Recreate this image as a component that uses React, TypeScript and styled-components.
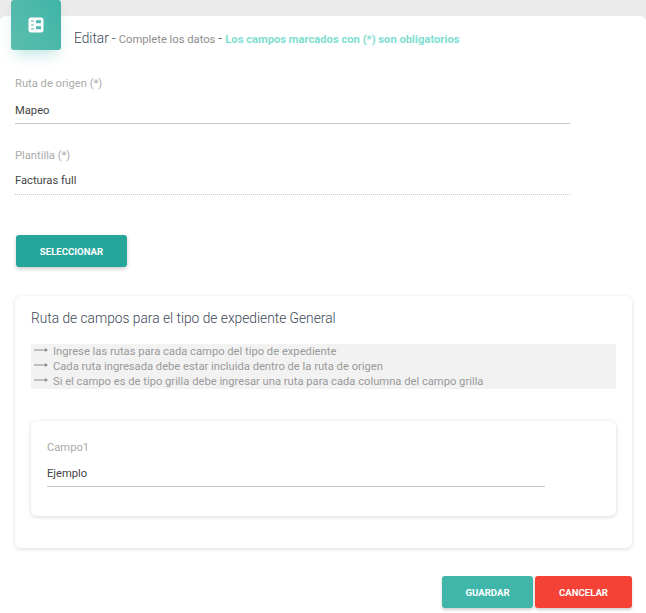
import React from 'react';
import styled, { createGlobalStyle } from 'styled-components';

const GlobalStyle = createGlobalStyle`
  html, body {
    margin: 0;
    padding: 0;
    background: #ebebeb;
    font-family: Roboto, "Liberation Sans", sans-serif;
  }
  * { box-sizing: border-box; }
`;

const Page = styled.div`
  width: 646px;
  height: 613px;
  padding-top: 16px;
  overflow: hidden;
  position: relative;
`;

const Sheet = styled.div`
  background: #fff;
  height: 597px;
  border-radius: 6px 6px 0 0;
  padding: 0 14px 0 15px;
`;

const HeaderIcon = styled.div`
  position: absolute;
  left: 11px;
  top: 0;
  width: 50px;
  height: 50px;
  border-radius: 3px;
  background: linear-gradient(60deg, #5cbdae, #3fb5a8);
  box-shadow: 0 8px 14px -4px rgba(38, 166, 154, 0.3);
  display: flex;
  align-items: center;
  justify-content: center;
`;

const Header = styled.div`
  height: 35px;
  padding: 14px 0 0 59px;
  display: flex;
  align-items: baseline;
  white-space: nowrap;
  color: #3c4858;
`;

const HeaderTitle = styled.span`
  font-size: 13.76px;
  font-weight: 300;
  color: #3c4858;
`;

const HeaderNote = styled.span`
  font-size: 11.2px;
  color: #8e8e8e;
  margin-left: 3px;
`;

const HeaderRequired = styled.span`
  font-size: 11.2px;
  font-weight: 700;
  color: #80ded0;
  margin-left: 3px;
`;

const Dash = styled.span`
  font-size: 13.76px;
  font-weight: 300;
  margin-left: 3px;
`;

const Field = styled.div<{ $width: number; $top: number }>`
  width: ${p => p.$width}px;
  padding-top: ${p => p.$top}px;
`;

const FieldLabel = styled.div`
  font-size: 11.2px;
  line-height: 14px;
  color: #aaa;
`;

const FieldValue = styled.div<{ $dotted?: boolean; $gap: number }>`
  font-size: 11.2px;
  line-height: 14px;
  color: #444;
  margin-top: ${p => p.$gap}px;
  padding-bottom: ${p => (p.$dotted ? 6 : 5)}px;
  border-bottom: 1px ${p => (p.$dotted ? 'dotted' : 'solid')} #c8c8c8;
`;

const SelectButton = styled.button`
  display: block;
  width: 111px;
  height: 32px;
  margin: 40px 0 0 1px;
  padding: 0;
  border: 0;
  border-radius: 3px;
  background: #26a69a;
  color: #fff;
  font-family: inherit;
  font-size: 9.6px;
  font-weight: 700;
  box-shadow: 0 2px 4px rgba(0, 0, 0, 0.2);
`;

const Card = styled.div`
  margin-top: 29px;
  width: 617px;
  height: 252px;
  border-radius: 6px;
  background: #fff;
  padding: 14px 16px 0;
  box-shadow: 0 1px 4px rgba(0, 0, 0, 0.14);
`;

const CardTitle = styled.div`
  font-size: 13.76px;
  font-weight: 300;
  line-height: 16px;
  color: #3c4858;
`;

const InfoBox = styled.div`
  margin-top: 18px;
  height: 45px;
  background: #f2f2f2;
  padding-left: 3px;
`;

const InfoRow = styled.div`
  display: flex;
  align-items: center;
  height: 15px;
  font-size: 11.2px;
  color: #9a9a9a;
  white-space: nowrap;
`;

const Arrow = styled.svg`
  width: 16px;
  height: 8px;
  margin-right: 3px;
  flex: none;
  position: relative;
  top: -2px;
`;

const InnerCard = styled.div`
  margin-top: 32px;
  height: 95px;
  border-radius: 6px;
  background: #fff;
  padding: 20px 16px 0;
  box-shadow: 0 1px 4px rgba(0, 0, 0, 0.16);
`;

const Actions = styled.div`
  display: flex;
  justify-content: flex-end;
  gap: 2px;
  width: 617px;
  margin-top: 28px;
`;

const ActionButton = styled.button<{ $bg: string; $width: number }>`
  width: ${p => p.$width}px;
  height: 32px;
  padding: 0;
  border: 0;
  border-radius: 3px;
  background: ${p => p.$bg};
  color: #fff;
  font-family: inherit;
  font-size: 9.6px;
  font-weight: 700;
  box-shadow: 0 2px 3px rgba(0, 0, 0, 0.18);
`;

const RightArrow = () => (
  <Arrow viewBox="0 0 16 8">
    <path d="M0 4h12" stroke="#7f7f7f" strokeWidth="0.9" fill="none" />
    <path d="M11 2.2 14 4 11 5.8z" fill="#7f7f7f" />
  </Arrow>
);

const rules = [
  'Ingrese las rutas para cada campo del tipo de expediente',
  'Cada ruta ingresada debe estar incluida dentro de la ruta de origen',
  'Si el campo es de tipo grilla debe ingresar una ruta para cada columna del campo grilla',
];

export default function App() {
  return (
    <Page>
      <GlobalStyle />
      <HeaderIcon>
        <svg width="16" height="16" viewBox="0 0 16 16">
          <rect x="0.5" y="0.5" width="15" height="15" rx="2.5" fill="#fff" />
          <path d="M3 4h3M3 8h3M3 12h3" stroke="#4db8ab" strokeWidth="1.2" />
          <rect x="8" y="3.2" width="5" height="3" fill="#4db8ab" />
          <rect x="8" y="9.2" width="5" height="3" fill="#4db8ab" />
        </svg>
      </HeaderIcon>
      <Sheet>
        <Header>
          <HeaderTitle>Editar</HeaderTitle>
          <Dash>-</Dash>
          <HeaderNote>Complete los datos</HeaderNote>
          <Dash>-</Dash>
          <HeaderRequired>Los campos marcados con (*) son obligatorios</HeaderRequired>
        </Header>
        <Field $width={555} $top={26}>
          <FieldLabel>Ruta de origen (*)</FieldLabel>
          <FieldValue $gap={13}>Mapeo</FieldValue>
        </Field>
        <Field $width={555} $top={25}>
          <FieldLabel>Plantilla (*)</FieldLabel>
          <FieldValue $gap={11} $dotted>Facturas full</FieldValue>
        </Field>
        <SelectButton>SELECCIONAR</SelectButton>
        <Card>
          <CardTitle>Ruta de campos para el tipo de expediente General</CardTitle>
          <InfoBox>
            {rules.map(rule => (
              <InfoRow key={rule}>
                <RightArrow />
                {rule}
              </InfoRow>
            ))}
          </InfoBox>
          <InnerCard>
            <Field $width={498} $top={0}>
              <FieldLabel>Campo1</FieldLabel>
              <FieldValue $gap={12}>Ejemplo</FieldValue>
            </Field>
          </InnerCard>
        </Card>
        <Actions>
          <ActionButton $bg="#40b6ab" $width={91}>GUARDAR</ActionButton>
          <ActionButton $bg="#f44336" $width={97}>CANCELAR</ActionButton>
        </Actions>
      </Sheet>
    </Page>
  );
}
